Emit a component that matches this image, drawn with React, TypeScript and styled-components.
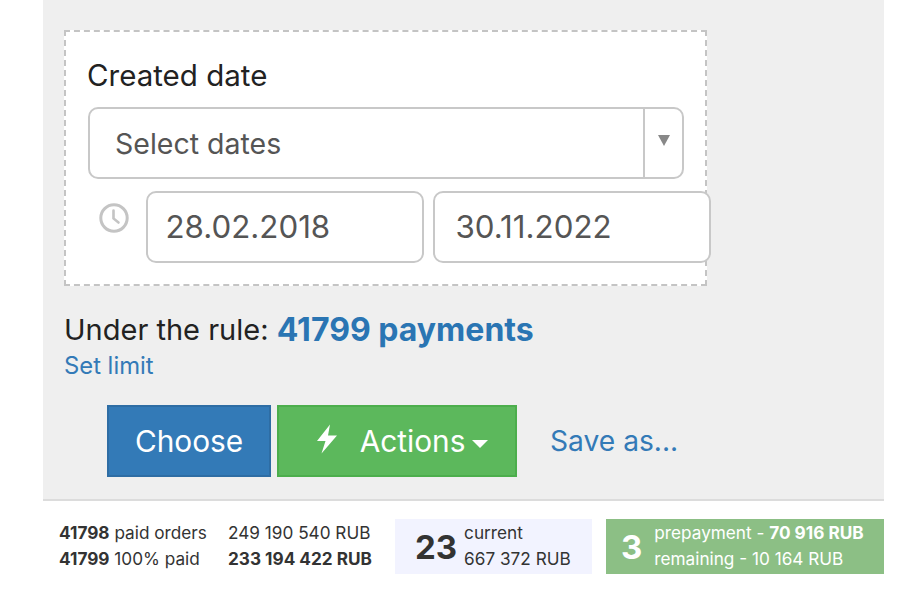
import React from 'react';
import styled, { createGlobalStyle } from 'styled-components';

const GlobalStyle = createGlobalStyle`
  html, body {
    margin: 0;
    padding: 0;
    background: #fff;
    font-family: Inter, "Liberation Sans", sans-serif;
  }
`;

const Page = styled.div`
  width: 900px;
  height: 592px;
  overflow: hidden;
  padding-left: 43px;
  box-sizing: border-box;
`;

const Panel = styled.div`
  width: 841px;
  height: 501px;
  box-sizing: border-box;
  padding: 30px 0 0 21px;
  background: #efefef;
  border-bottom: 2px solid #dcdcdc;
`;

const FilterBox = styled.div`
  width: 643px;
  height: 256px;
  box-sizing: border-box;
  padding: 27px 0 0 22px;
  background: #fff;
  border: 2px dashed #c4c4c4;
`;

const FilterLabel = styled.div`
  margin-left: -1px;
  margin-bottom: 16px;
  font-size: 29.5px;
  line-height: 32px;
  color: #222;
`;

const SelectBox = styled.div`
  display: flex;
  width: 596px;
  height: 72px;
  box-sizing: border-box;
  background: #fff;
  border: 2px solid #c8c8c8;
  border-radius: 10px;
`;

const SelectValue = styled.div`
  flex: 1;
  display: flex;
  align-items: center;
  padding-left: 25px;
  font-size: 28.5px;
  color: #555;
`;

const SelectArrow = styled.div`
  width: 39px;
  display: flex;
  align-items: center;
  justify-content: center;
  padding-bottom: 5px;
  box-sizing: border-box;
  border-left: 2px solid #c8c8c8;

  &::after {
    content: '';
    border-left: 6.5px solid transparent;
    border-right: 6.5px solid transparent;
    border-top: 11px solid #888;
  }
`;

const DateRow = styled.div`
  display: flex;
  align-items: flex-start;
  margin-top: 12px;
  margin-left: 11px;
`;

const ClockIcon = styled.svg`
  width: 30px;
  height: 30px;
  margin-top: 12px;
  margin-right: 17px;
  flex: none;
`;

const DateInput = styled.div<{ $inset: number }>`
  flex: none;
  width: 278px;
  height: 72px;
  box-sizing: border-box;
  margin-right: 9px;
  padding-left: ${p => p.$inset}px;
  padding-bottom: 1px;
  display: flex;
  align-items: center;
  background: #fff;
  border: 2px solid #c8c8c8;
  border-radius: 10px;
  font-size: 31.3px;
  color: #555;
`;

const RuleLine = styled.div`
  margin-top: 26px;
  height: 36px;
  font-size: 29px;
  line-height: 36px;
  color: #222;
`;

const RuleCount = styled.a`
  color: #2a75b3;
  font-size: 32px;
  font-weight: 700;
  vertical-align: -1px;
`;

const LimitLink = styled.a`
  display: block;
  font-size: 23.8px;
  line-height: 36px;
  color: #337ab7;
`;

const ActionRow = styled.div`
  display: flex;
  align-items: center;
  margin-top: 21px;
  margin-left: 43px;
`;

const Button = styled.div<{ $tone: 'blue' | 'green' }>`
  height: 72px;
  box-sizing: border-box;
  display: flex;
  align-items: center;
  justify-content: center;
  margin-right: 6px;
  font-size: 29.8px;
  color: #fff;
  width: ${p => (p.$tone === 'blue' ? '164px' : '240px')};
  padding-left: ${p => (p.$tone === 'blue' ? '0' : '8px')};
  background: ${p => (p.$tone === 'blue' ? '#337ab7' : '#5cb85c')};
  border: 2px solid ${p => (p.$tone === 'blue' ? '#2e6da4' : '#4cae4c')};
`;

const BoltIcon = styled.svg`
  width: 22px;
  height: 30px;
  margin-left: 2px;
  margin-right: 22px;
  margin-top: -5px;
`;

const Caret = styled.span`
  margin-left: 7px;
  margin-top: 5px;
  border-left: 8px solid transparent;
  border-right: 8px solid transparent;
  border-top: 8px solid #fff;
`;

const SaveLink = styled.a`
  margin-left: 27px;
  font-size: 28.2px;
  color: #337ab7;
`;

const StatsBar = styled.div`
  display: flex;
  align-items: flex-start;
  margin-top: 18px;
  margin-left: 16px;
  font-size: 17.2px;
  line-height: 26px;
  color: #333;
`;

const StatColumn = styled.div<{ $width: number }>`
  width: ${p => p.$width}px;
  padding-top: 1px;
  white-space: nowrap;
`;

const StatCard = styled.div<{ $tone: 'light' | 'green' }>`
  display: flex;
  align-items: center;
  height: 55px;
  box-sizing: border-box;
  white-space: nowrap;
  background: ${p => (p.$tone === 'light' ? '#f2f3ff' : '#8cbf85')};
  color: ${p => (p.$tone === 'light' ? '#333' : '#fff')};
  width: ${p => (p.$tone === 'light' ? '197px' : '278px')};
  margin-left: ${p => (p.$tone === 'light' ? '0' : '14px')};
  padding-left: ${p => (p.$tone === 'light' ? '20px' : '15px')};
`;

const CardNumber = styled.div<{ $gap: number }>`
  font-size: 33px;
  font-weight: 700;
  margin-right: ${p => p.$gap}px;
`;

const CardText = styled.div`
  margin-top: -1px;
`;

export default function App() {
  return (
    <>
      <GlobalStyle />
      <Page>
        <Panel>
          <FilterBox>
            <FilterLabel>Created date</FilterLabel>
            <SelectBox>
              <SelectValue>Select dates</SelectValue>
              <SelectArrow />
            </SelectBox>
            <DateRow>
              <ClockIcon viewBox="0 0 30 30" fill="none" stroke="#c4c4c4" strokeWidth="3" strokeLinecap="round">
                <circle cx="15" cy="15" r="13.2" />
                <path d="M14.5 7.500v8l5 4" strokeWidth="2.6" />
              </ClockIcon>
              <DateInput $inset={17.5}>28.02.2018</DateInput>
              <DateInput $inset={20.5}>30.11.2022</DateInput>
            </DateRow>
          </FilterBox>
          <RuleLine>
            Under the rule: <RuleCount>41799 payments</RuleCount>
          </RuleLine>
          <LimitLink>Set limit</LimitLink>
          <ActionRow>
            <Button $tone="blue">Choose</Button>
            <Button $tone="green">
              <BoltIcon viewBox="0 0 22 30" fill="#fff">
                <path d="M14 0.500 1 17h8.500L5.500 29.500 21 11.500h-9z" />
              </BoltIcon>
              Actions
              <Caret />
            </Button>
            <SaveLink>Save as...</SaveLink>
          </ActionRow>
        </Panel>
        <StatsBar>
          <StatColumn $width={169}>
            <div><b>41798</b> paid orders</div>
            <div><b>41799</b> 100% paid</div>
          </StatColumn>
          <StatColumn $width={167}>
            <div>249 190 540 RUB</div>
            <div><b>233 194 422 RUB</b></div>
          </StatColumn>
          <StatCard $tone="light">
            <CardNumber $gap={7}>23</CardNumber>
            <CardText>
              <div>current</div>
              <div>667 372 RUB</div>
            </CardText>
          </StatCard>
          <StatCard $tone="green">
            <CardNumber $gap={12}>3</CardNumber>
            <CardText>
              <div>prepayment - <b>70 916 RUB</b></div>
              <div>remaining - 10 164 RUB</div>
            </CardText>
          </StatCard>
        </StatsBar>
      </Page>
    </>
  );
}
